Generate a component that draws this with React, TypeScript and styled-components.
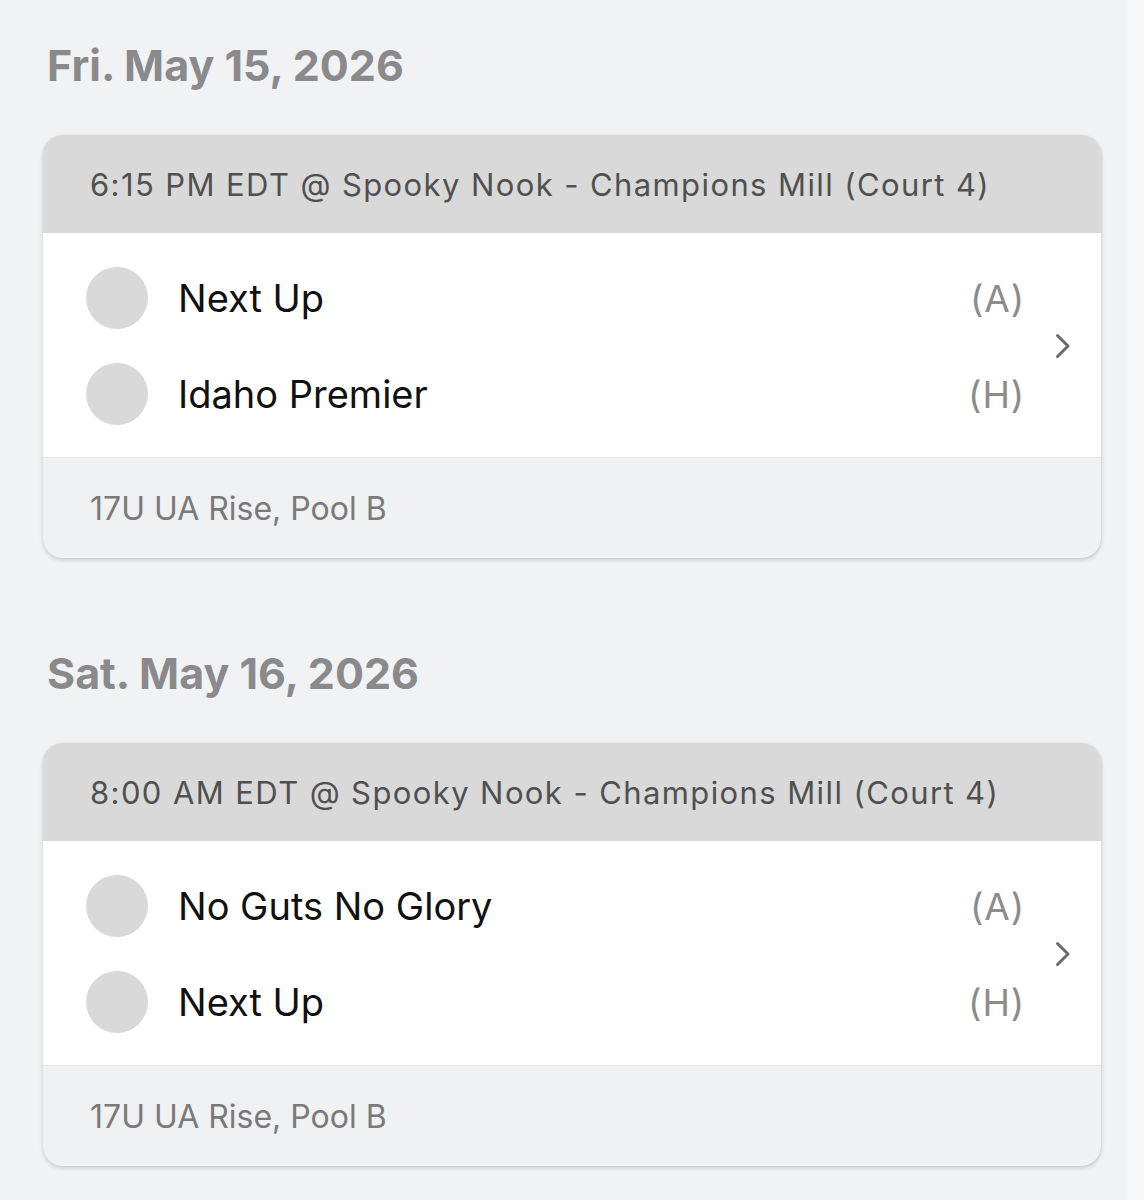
import React from "react";
import styled, { createGlobalStyle } from "styled-components";

const GlobalStyle = createGlobalStyle`
  html, body {
    margin: 0;
    padding: 0;
    background: #f1f2f4;
  }
  body {
    font-family: Inter, "Open Sans", Arial, sans-serif;
  }
`;

const Page = styled.div`
  display: grid;
  grid-template-columns: 1fr 17px;
  min-height: 1200px;
`;

const Main = styled.main`
  padding: 40px 26px 40px 43px;
  display: flex;
  flex-direction: column;
`;

const Side = styled.div`
  background: #f7f8fa;
`;

const Section = styled.section`
  display: flex;
  flex-direction: column;
  & + & {
    margin-top: 90px;
  }
`;

const DateHeading = styled.h2`
  margin: 0 0 45px 4px;
  height: 50px;
  line-height: 50px;
  font-size: 43px;
  font-weight: 700;
  color: #8a8a8c;
`;

const Card = styled.div`
  background: #f0f1f3;
  border-radius: 20px;
  overflow: hidden;
  box-shadow: 0 2px 4px rgba(0, 0, 0, 0.16), 1px 0 2px rgba(0, 0, 0, 0.06);
`;

const CardHeader = styled.div`
  height: 98px;
  display: flex;
  align-items: center;
  padding-left: 47px;
  background: #d9d9d9;
  color: #505050;
  font-size: 31px;
  letter-spacing: 1.4px;
  font-weight: 400;
`;

const CardBody = styled.div`
  display: flex;
  align-items: center;
  background: #ffffff;
  padding: 17px 0 15px 43px;
`;

const Teams = styled.div`
  flex: 1;
  display: flex;
  flex-direction: column;
`;

const TeamRow = styled.div`
  height: 96px;
  display: flex;
  align-items: center;
`;

const Avatar = styled.div`
  width: 62px;
  height: 62px;
  border-radius: 50%;
  background: #d9d9d9;
  flex-shrink: 0;
`;

const TeamName = styled.span`
  margin-left: 30px;
  flex: 1;
  font-size: 38px;
  color: #111111;
`;

const SideTag = styled.span`
  font-size: 37px;
  letter-spacing: 0.8px;
  color: #8c8c8c;
`;

const ChevronCell = styled.div`
  width: 76px;
  display: flex;
  justify-content: center;
  align-items: center;
`;

const CardFooter = styled.div`
  height: 100px;
  display: flex;
  align-items: center;
  padding-left: 47px;
  color: #7a7a7a;
  font-size: 32px;
  border-top: 1px solid #e6e7e9;
`;

const Chevron = () => (
  <svg width="16" height="26" viewBox="0 0 16 26" fill="none">
    <path
      d="M2.5 2.5 L13 13 L2.5 23.5"
      stroke="#6a6a6a"
      strokeWidth="3"
      strokeLinecap="round"
      strokeLinejoin="round"
    />
  </svg>
);

type Game = {
  date: string;
  header: string;
  away: string;
  home: string;
  footer: string;
};

const games: Game[] = [
  {
    date: "Fri. May 15, 2026",
    header: "6:15 PM EDT @ Spooky Nook - Champions Mill (Court 4)",
    away: "Next Up",
    home: "Idaho Premier",
    footer: "17U UA Rise, Pool B",
  },
  {
    date: "Sat. May 16, 2026",
    header: "8:00 AM EDT @ Spooky Nook - Champions Mill (Court 4)",
    away: "No Guts No Glory",
    home: "Next Up",
    footer: "17U UA Rise, Pool B",
  },
];

export default function App() {
  return (
    <>
      <GlobalStyle />
      <Page>
        <Main>
          {games.map((g) => (
            <Section key={g.date}>
              <DateHeading>{g.date}</DateHeading>
              <Card>
                <CardHeader>{g.header}</CardHeader>
                <CardBody>
                  <Teams>
                    <TeamRow>
                      <Avatar />
                      <TeamName>{g.away}</TeamName>
                      <SideTag>(A)</SideTag>
                    </TeamRow>
                    <TeamRow>
                      <Avatar />
                      <TeamName>{g.home}</TeamName>
                      <SideTag>(H)</SideTag>
                    </TeamRow>
                  </Teams>
                  <ChevronCell>
                    <Chevron />
                  </ChevronCell>
                </CardBody>
                <CardFooter>{g.footer}</CardFooter>
              </Card>
            </Section>
          ))}
        </Main>
        <Side />
      </Page>
    </>
  );
}
